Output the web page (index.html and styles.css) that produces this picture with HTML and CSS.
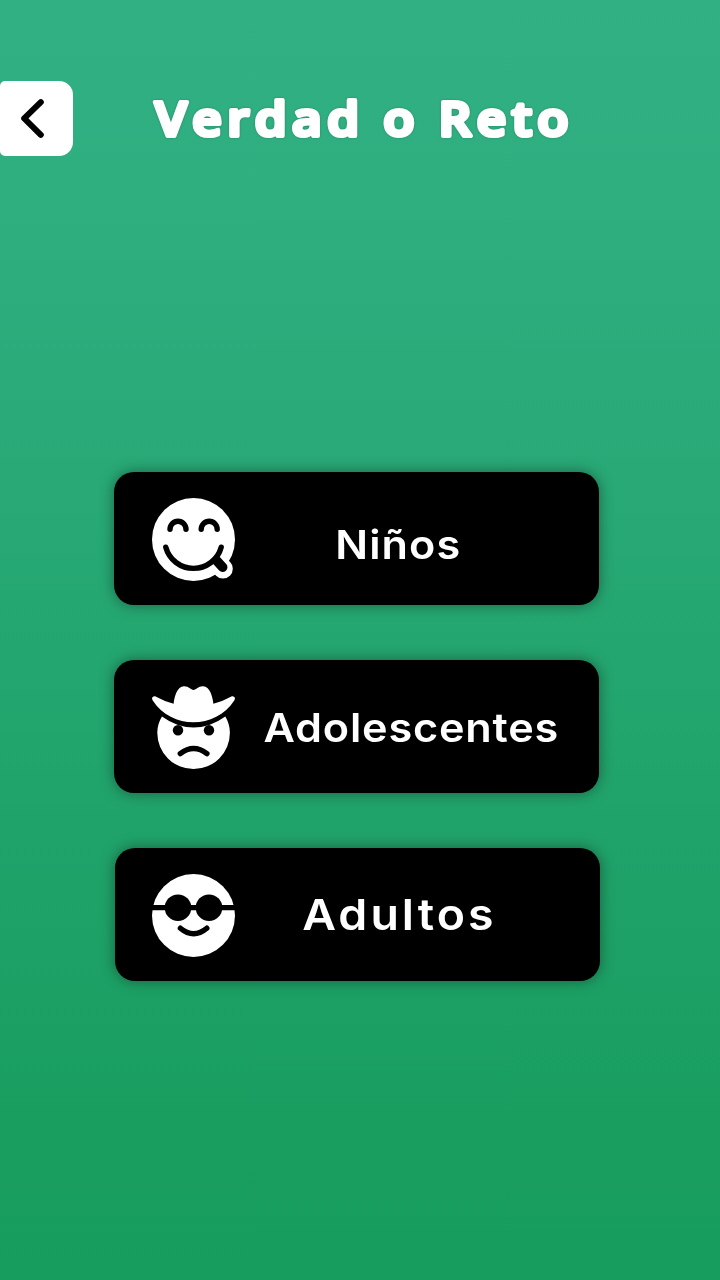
FILE: index.html
```html
<!DOCTYPE html>
<html lang="es">
<head>
<meta charset="utf-8">
<title>Verdad o Reto</title>
<link rel="stylesheet" href="styles.css">
</head>
<body>
<main class="screen">
  <header class="top">
    <button class="back" aria-label="Atrás">
      <svg class="chevron" viewBox="0 0 25 40"><path d="M20.8 3.2 4.2 19.4 20.8 35.8"/></svg>
    </button>
    <h1 class="title">
      <svg class="wordmark" viewBox="0 0 430 75"><text x="9" y="55" textLength="419" lengthAdjust="spacingAndGlyphs">Verdad o Reto</text></svg>
    </h1>
  </header>
  <nav class="modes">
    <button class="mode">
      <svg class="face" viewBox="0 0 84 84">
        <circle cx="41.5" cy="41.5" r="41.5"/>
        <circle cx="71" cy="70.8" r="9.8"/>
        <g class="line">
          <path d="M18 31.3a8 8 0 0 1 16 0M49.2 31.3a8 8 0 0 1 16 0M13.8 49.2a28.7 28.7 0 0 0 55.4 0"/>
          <path class="tongue" d="M64.5 62.5l6.2 6.8"/>
        </g>
      </svg>
      <span class="label kids">Niños</span>
    </button>
    <button class="mode">
      <svg class="face" viewBox="0 0 84 84">
        <path d="M10 30.6Q25 41.6 41.6 41.6T73.3 30.6C76 35 77.9 40.5 77.9 46.8A36.3 36.3 0 0 1 5.3 46.8C5.3 40.5 7.2 35 10 30.6Z"/>
        <path d="M3.6 10.5Q12 15.2 21.6 17.8C22.6 10 25 .5 32 .2 37 .1 38.6 3.9 41.5 3.9S46 .1 51 .2C58 .5 60.4 10 61.4 17.8Q71 15.2 79.4 10.5C82.2 9.8 83.8 12 82.4 14.2 73 29 57 36.3 41.5 36.3S10 29 .6 14.2C-.8 12 .8 9.8 3.6 10.5Z"/>
        <circle class="hole" cx="26" cy="44.3" r="5.2"/>
        <circle class="hole" cx="57" cy="44.3" r="5.2"/>
        <path class="line" d="M28.3 67.7Q41.6 57.5 54.9 67.7"/>
      </svg>
      <span class="label teens">Adolescentes</span>
    </button>
    <button class="mode last">
      <svg class="face" viewBox="0 0 84 84">
        <circle cx="41.5" cy="41.5" r="41.5"/>
        <path class="hole" d="M0 31h84v5.2H0z"/>
        <circle class="hole" cx="26" cy="33.7" r="13.3"/>
        <circle class="hole" cx="57" cy="33.7" r="13.3"/>
        <path class="line" d="M28.4 54.2Q41.6 65.2 54.8 54.2"/>
      </svg>
      <span class="label adults">Adultos</span>
    </button>
  </nav>
</main>
</body>
</html>
```
FILE: styles.css
```css
* { box-sizing: border-box; }
body { margin: 0; }
button { border: 0; padding: 0; font: inherit; }

.screen {
  width: 720px;
  height: 1280px;
  padding-top: 81px;
  overflow: hidden;
  background: linear-gradient(180deg, #31b084 0%, #2fae80 15%, #199e60 88%, #179d5d 100%);
}

.top {
  display: flex;
  align-items: center;
  height: 75px;
}

.back {
  display: flex;
  align-items: center;
  width: 73px;
  height: 75px;
  padding-left: 20px;
  background: #fff;
  border-radius: 5px 14px 14px 5px;
}

.chevron {
  flex: none;
  width: 25px;
  height: 40px;
  fill: none;
  stroke: #000;
  stroke-width: 6;
  stroke-linecap: round;
  stroke-linejoin: round;
}

.title {
  margin: 0 0 0 73px;
}

.wordmark {
  display: block;
  width: 430px;
  height: 75px;
  fill: #fff;
  stroke: #fff;
  stroke-width: 4.2px;
  stroke-linejoin: round;
  font: 600 47px "Open Sans", sans-serif;
  letter-spacing: 5px;
  filter: drop-shadow(0 0 1px rgba(20, 70, 45, .35));
}

.modes {
  display: flex;
  flex-direction: column;
  gap: 55px;
  margin: 316px 0 0 114px;
}

.mode {
  display: flex;
  align-items: center;
  width: 485px;
  height: 133px;
  padding: 2px 33px 0 38px;
  background: #000;
  border-radius: 20px;
  box-shadow: 0 0 14px rgba(20, 50, 35, .6);
}

.last {
  margin-left: 1px;
  padding: 2px 34px 0 37px;
}

.face {
  flex: none;
  width: 84px;
  height: 84px;
  fill: #fff;
}

.hole { fill: #000; }

.line {
  fill: none;
  stroke: #000;
  stroke-width: 5.4;
  stroke-linecap: round;
  stroke-linejoin: round;
}

.tongue { stroke-width: 9.5; }

.label {
  flex: 1;
  color: #fff;
  font: 600 40px/60px Inter, sans-serif;
  text-align: center;
  white-space: nowrap;
  transform: scaleX(1.08);
}

.kids { padding: 10px 5px 0 0; letter-spacing: 1px; }
.teens { padding-left: 19px; letter-spacing: .75px; }
.adults { padding: 0 3px 4px 0; font-size: 43px; letter-spacing: 2.8px; }
```
